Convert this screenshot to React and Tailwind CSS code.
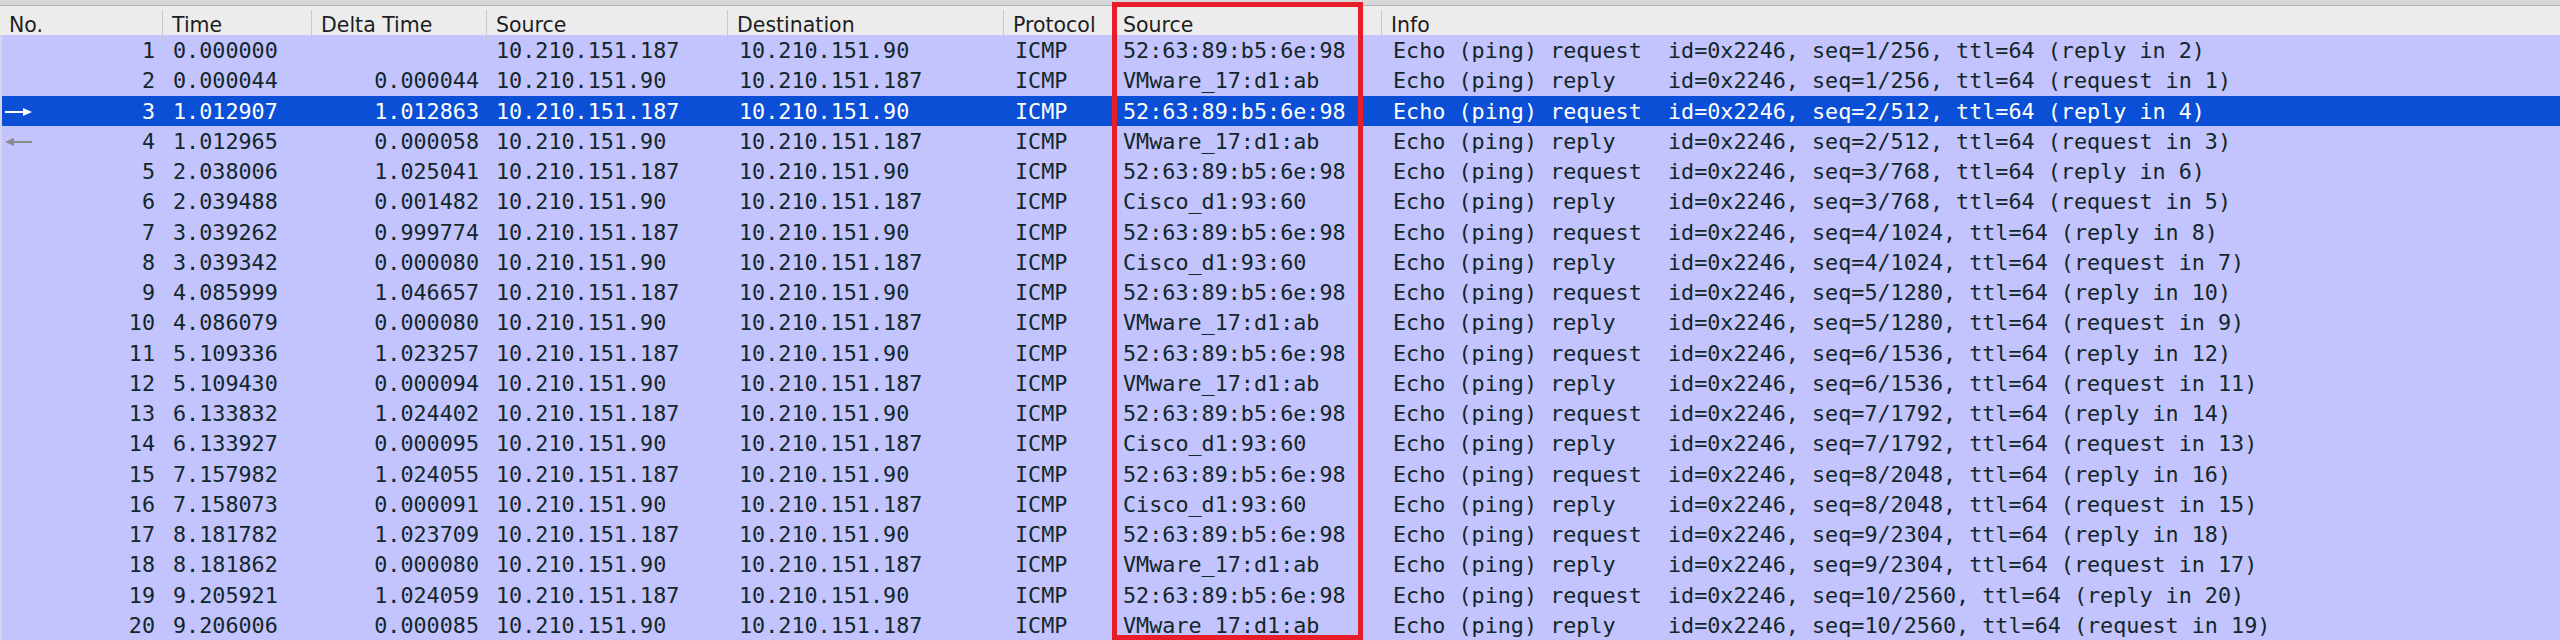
import React from "react";

const MAC = "52:63:89:b5:6e:98";
const VM = "VMware_17:d1:ab";
const CISCO = "Cisco_d1:93:60";
const HOST_A = "10.210.151.187";
const HOST_B = "10.210.151.90";

// [no, time, delta, src mac, seq, peer]
const raw = [
  [1, "0.000000", "", MAC, "1/256", 2],
  [2, "0.000044", "0.000044", VM, "1/256", 1],
  [3, "1.012907", "1.012863", MAC, "2/512", 4],
  [4, "1.012965", "0.000058", VM, "2/512", 3],
  [5, "2.038006", "1.025041", MAC, "3/768", 6],
  [6, "2.039488", "0.001482", CISCO, "3/768", 5],
  [7, "3.039262", "0.999774", MAC, "4/1024", 8],
  [8, "3.039342", "0.000080", CISCO, "4/1024", 7],
  [9, "4.085999", "1.046657", MAC, "5/1280", 10],
  [10, "4.086079", "0.000080", VM, "5/1280", 9],
  [11, "5.109336", "1.023257", MAC, "6/1536", 12],
  [12, "5.109430", "0.000094", VM, "6/1536", 11],
  [13, "6.133832", "1.024402", MAC, "7/1792", 14],
  [14, "6.133927", "0.000095", CISCO, "7/1792", 13],
  [15, "7.157982", "1.024055", MAC, "8/2048", 16],
  [16, "7.158073", "0.000091", CISCO, "8/2048", 15],
  [17, "8.181782", "1.023709", MAC, "9/2304", 18],
  [18, "8.181862", "0.000080", VM, "9/2304", 17],
  [19, "9.205921", "1.024059", MAC, "10/2560", 20],
  [20, "9.206006", "0.000085", VM, "10/2560", 19],
];

const packets = raw.map(([no, time, delta, mac, seq, peer]) => {
  const isReq = no % 2 === 1;
  return {
    no,
    time,
    delta,
    src: isReq ? HOST_A : HOST_B,
    dst: isReq ? HOST_B : HOST_A,
    mac,
    info: isReq
      ? `Echo (ping) request  id=0x2246, seq=${seq}, ttl=64 (reply in ${peer})`
      : `Echo (ping) reply    id=0x2246, seq=${seq}, ttl=64 (request in ${peer})`,
  };
});

const cols =
  "grid grid-cols-[162px_149px_175px_241px_276px_110px_268px_1fr]";

const headers = [
  "No.",
  "Time",
  "Delta Time",
  "Source",
  "Destination",
  "Protocol",
  "Source",
  "Info",
];

const RightArrow = () => (
  <svg width="28" height="10" viewBox="0 0 28 10">
    <line x1="0" y1="5" x2="20" y2="5" stroke="white" strokeWidth="2" />
    <polygon points="18,1 27,5 18,9" fill="white" />
  </svg>
);

const LeftArrow = () => (
  <svg width="28" height="10" viewBox="0 0 28 10">
    <line x1="8" y1="5" x2="27" y2="5" stroke="#8a8a8a" strokeWidth="2" />
    <polygon points="9,1 0,5 9,9" fill="#8a8a8a" />
  </svg>
);

const App = () => {
  return (
    <div className="relative w-[2560px] h-[640px] overflow-hidden bg-[#c3c3fe]">
      {/* window strip above the list */}
      <div className="h-[6px] bg-[#d8d8d8] border-b border-[#b4b4b4]" />

      {/* column headers */}
      <div
        className={`${cols} h-[29px] bg-[#ececec] text-[#1e1e1e] text-[20.5px] font-['DejaVu_Sans',sans-serif]`}
      >
        {headers.map((h, i) => (
          <div
            key={i}
            className={`flex items-center pl-[9px] ${
              i > 0 ? "border-l border-[#c8c8c8] my-[4px]" : ""
            }`}
          >
            {h}
          </div>
        ))}
      </div>

      {/* packet rows */}
      <div className="font-['DejaVu_Sans_Mono',monospace] text-[21.75px] border-l-[2px] border-[#d4d4ec]">
        {packets.map((p) => {
          const selected = p.no === 3;
          return (
            <div
              key={p.no}
              className={`${cols} h-[30.25px] items-center whitespace-pre ${
                selected
                  ? "bg-[#0a4fd6] text-white"
                  : "bg-[#c3c3fe] text-[#12272a]"
              }`}
            >
              <div className="flex items-center justify-between pl-[3px] pr-[9px]">
                <span className="flex items-center">
                  {p.no === 3 && <RightArrow />}
                  {p.no === 4 && <LeftArrow />}
                </span>
                <span>{p.no}</span>
              </div>
              <div className="pl-[9px]">{p.time}</div>
              <div className="text-right pr-[9px]">{p.delta}</div>
              <div className="pl-[8px]">{p.src}</div>
              <div className="pl-[10px]">{p.dst}</div>
              <div className="pl-[10px]">ICMP</div>
              <div className="pl-[8px]">{p.mac}</div>
              <div className="pl-[10px]">{p.info}</div>
            </div>
          );
        })}
      </div>

      {/* red highlight drawn over the second Source column */}
      <div className="absolute left-[1112px] top-[2px] bottom-0 w-[251px] border-[5px] border-[#e81d2a] pointer-events-none" />
    </div>
  );
};

export default App;
